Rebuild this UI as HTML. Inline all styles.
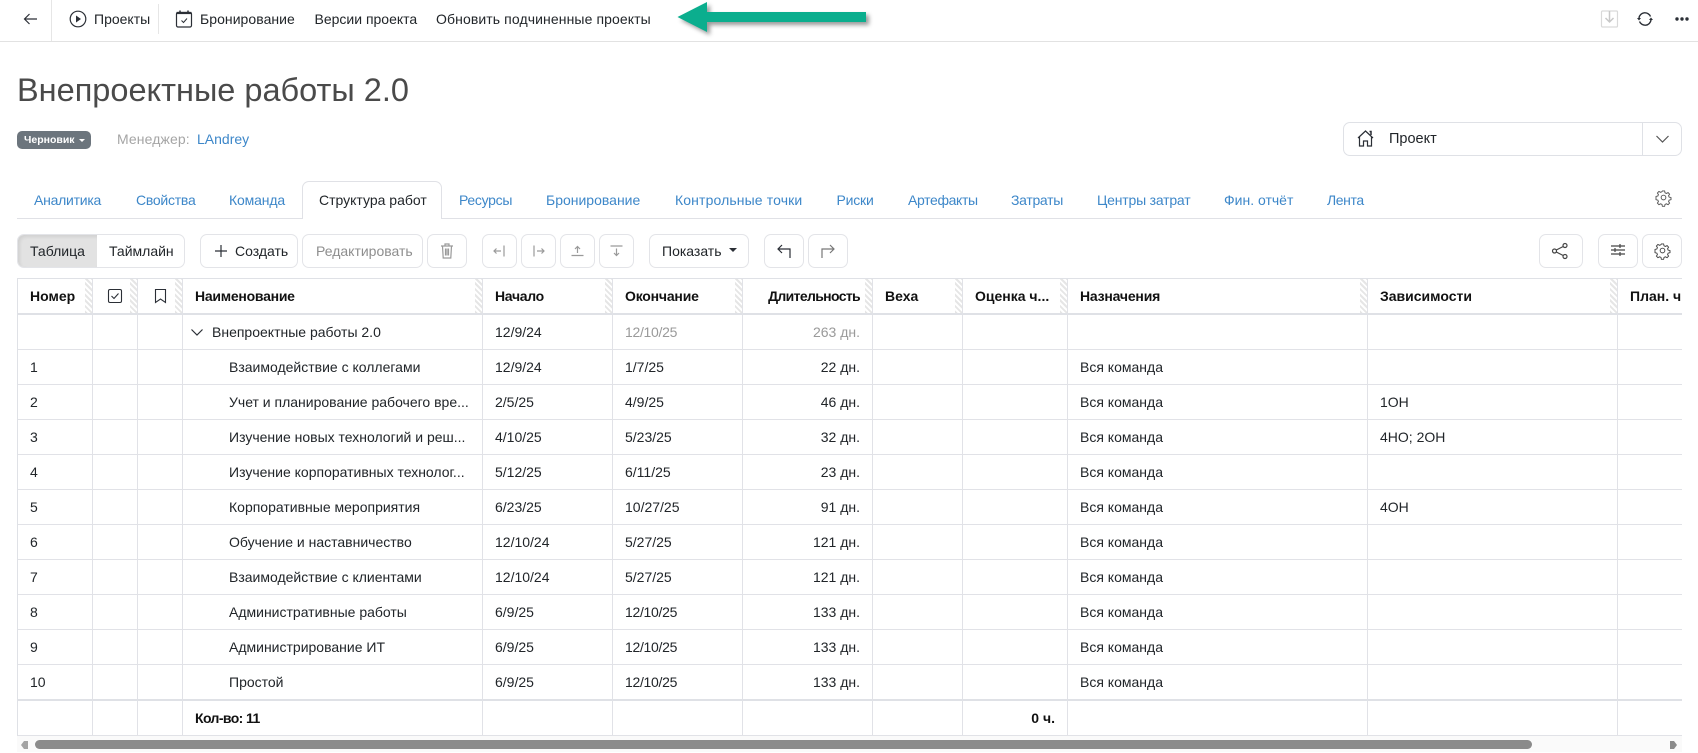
<!DOCTYPE html>
<html lang="ru"><head><meta charset="utf-8"><title>Внепроектные работы 2.0</title>
<style>
*{box-sizing:border-box}
html,body{margin:0;padding:0;background:#fff}
body{width:1698px;height:753px;overflow:hidden;position:relative;font-family:"Liberation Sans","Noto Sans CJK SC",sans-serif;font-size:14px;color:#212529}
.a{position:absolute;white-space:nowrap;line-height:20px}
.i{position:absolute;overflow:visible;fill:none;stroke:#2b2f36;stroke-width:1.2}
.tab{color:#3d87c9;top:190px}
.b{position:absolute;top:234px;height:34px;border:1px solid #e3e4e8;border-radius:7px;background:#fff}
.d{stroke:#9a9a9a}
table{position:absolute;left:17px;top:278px;width:1665px;border-collapse:separate;border-spacing:0;table-layout:fixed;border-left:1px solid #dfe1e6;border-top:1px solid #dfe1e6}
th,td{padding:0 12px;border-right:1px solid #e1e2e7;border-bottom:1px solid #e1e2e7;white-space:nowrap;overflow:hidden;text-align:left;font-weight:400;height:35px}
th{height:36px;border-bottom:2px solid #dfe1e6;font-weight:700;color:#111;position:relative}
th:not(:last-child)::after{content:"";position:absolute;right:0;top:0;bottom:0;width:7px;background:repeating-linear-gradient(45deg,#e6e6e6 0 2px,#fff 2px 4px)}
td:last-child,th:last-child{border-right:0}
.r{text-align:right}
.n{padding-left:46px}
.g{color:#9a9a9a}
.e{text-overflow:ellipsis}
.t{letter-spacing:-.3px}
tr.l td{height:34px;border-bottom:0}
tr.f td{height:37px;border-top:2px solid #dfe1e6;font-weight:700;color:#111}
</style></head><body>

<div style="position:absolute;left:0;top:41px;width:1698px;height:1px;background:#e2e2e2"></div>
<div style="position:absolute;left:51px;top:0;width:1px;height:41px;background:#e6e6e6"></div>
<div style="position:absolute;left:158px;top:4px;width:1px;height:30px;background:#e6e6e6"></div>

<svg class="i" style="left:23px;top:12px" width="15" height="14" viewBox="0 0 15 14"><path d="M14 7H1.500M6.500 2 1.500 7l5 5"/></svg>
<svg class="i" style="left:69px;top:10px" width="18" height="18" viewBox="0 0 18 18"><circle cx="9" cy="9" r="7.800"/><path d="M7 5.500 12 9l-5 3.500z" fill="#2b2f36" stroke="none"/></svg>
<span class="a" style="left:94px;top:9px">Проекты</span>
<svg class="i" style="left:175px;top:10px" width="18" height="18" viewBox="0 0 18 18"><rect x="1.500" y="2.500" width="15" height="14.500" rx="1.500"/><path d="M1.500 3h15" stroke-width="2.200"/><path d="M5 .5v2M13 .5v2" stroke-width="1.500"/><path d="M6.500 10.500l2 2 3.500-4" stroke-width="1"/></svg>
<span class="a" style="left:200px;top:9px;letter-spacing:.05px">Бронирование</span>
<span class="a" style="left:314.500px;top:9px">Версии проекта</span>
<span class="a" style="left:436px;top:9px;letter-spacing:.1px">Обновить подчиненные проекты</span>

<svg style="position:absolute;left:677px;top:2px;overflow:visible;filter:drop-shadow(3px 3px 2px rgba(0,0,0,.4))" width="190" height="30" viewBox="0 0 190 30"><path d="M0.500 15 30 0V10H189V20H30V30z" fill="#0bae8e"/></svg>

<svg class="i" style="left:1601px;top:10px;stroke:#d9d9d9" width="17" height="18" viewBox="0 0 17 18"><rect x=".5" y="1" width="16" height="16" rx="1"/><path d="M8.500 1v10M4.500 8l4 4 4-4" stroke="#c8c8c8" stroke-width="1.500"/></svg>
<svg class="i" style="left:1637px;top:11px;stroke-width:1.400" width="16" height="16" viewBox="0 0 16 16"><path d="M2 7A6 6 0 0 1 13.500 5.500M14 9A6 6 0 0 1 2.500 10.500"/><path d="M0 7h4L2 9.500zM16 9h-4l2-2.500z" fill="#2b2f36" stroke="none"/></svg>
<svg class="i" style="left:1675px;top:17px;stroke:none;fill:#2b2f36" width="14" height="4" viewBox="0 0 14 4"><circle cx="2" cy="2" r="1.700"/><circle cx="7" cy="2" r="1.700"/><circle cx="12" cy="2" r="1.700"/></svg>

<div class="a" style="left:17px;top:69px;font-size:32.500px;line-height:42px;color:#4a4a4a">Внепроектные работы 2.0</div>

<div style="position:absolute;left:17px;top:131px;width:74px;height:18px;background:#6c757d;border-radius:5px"></div>
<span class="a" style="left:24px;top:130px;color:#fff;font-size:10.500px;font-weight:700">Черновик</span>
<div style="position:absolute;left:79px;top:139px;border:3px solid transparent;border-top-color:#fff;border-bottom:0"></div>
<span class="a" style="left:117px;top:129px;color:#a5a5a5;letter-spacing:.1px">Менеджер:</span>
<span class="a" style="left:197px;top:129px;color:#3d87c9">LAndrey</span>

<div style="position:absolute;left:1343px;top:122px;width:339px;height:34px;border:1px solid #dfe1e6;border-radius:7px"></div>
<div style="position:absolute;left:1642px;top:122px;width:1px;height:34px;background:#dfe1e6"></div>
<svg class="i" style="left:1357px;top:130px" width="17" height="17" viewBox="0 0 17 17"><path d="M1 8 8.500 1 16 8M2.500 7v9h4v-5h4v5h4V7"/><path d="M12.500 1.500h1.500V5" stroke-width="1.500"/></svg>
<span class="a" style="left:1389px;top:129px;font-size:14.500px">Проект</span>
<svg class="i" style="left:1656px;top:135px;stroke:#555" width="13" height="8" viewBox="0 0 13 8"><path d="M.5 1l6 6 6-6"/></svg>

<div style="position:absolute;left:17px;top:218px;width:1665px;height:1px;background:#e0e1e6"></div>
<div style="position:absolute;left:302px;top:181px;width:140px;height:38px;background:#fff;border:1px solid #e0e1e6;border-bottom:0;border-radius:7px 7px 0 0"></div>
<span class="a tab" style="left:34px;letter-spacing:-.25px">Аналитика</span>
<span class="a tab" style="left:136px;letter-spacing:-.25px">Свойства</span>
<span class="a tab" style="left:229px;letter-spacing:-.15px">Команда</span>
<span class="a tab" style="left:319px;color:#212529">Структура работ</span>
<span class="a tab" style="left:459px;letter-spacing:-.3px">Ресурсы</span>
<span class="a tab" style="left:546px">Бронирование</span>
<span class="a tab" style="left:675px;letter-spacing:.12px">Контрольные точки</span>
<span class="a tab" style="left:836.500px;letter-spacing:-.2px">Риски</span>
<span class="a tab" style="left:908px;letter-spacing:-.35px">Артефакты</span>
<span class="a tab" style="left:1011px;letter-spacing:-.3px">Затраты</span>
<span class="a tab" style="left:1097px;letter-spacing:-.2px">Центры затрат</span>
<span class="a tab" style="left:1224px">Фин. отчёт</span>
<span class="a tab" style="left:1327px;letter-spacing:-.4px">Лента</span>
<svg class="i" style="left:1656px;top:190px;stroke:#555;stroke-width:1" width="15" height="15" viewBox="0 0 16 16"><circle cx="8" cy="8" r="2.500"/><path d="M6.800 1h2.400l.4 2 1.500.7 1.800-1 1.600 1.700-1.100 1.700.6 1.500 2 .5v2.200l-2 .5-.6 1.500 1.100 1.700-1.600 1.700-1.800-1-1.500.7-.4 2H6.800l-.4-2-1.500-.7-1.800 1-1.600-1.700 1.100-1.700-.6-1.500-2-.5V6.900l2-.5.6-1.500-1.100-1.700 1.600-1.700 1.800 1 1.500-.7z"/></svg>

<div class="b" style="left:17px;width:168px"></div>
<div style="position:absolute;left:18px;top:235px;width:79px;height:32px;background:#e2e2e2;border-radius:6px 0 0 6px;box-shadow:inset 2px 2px 3px rgba(0,0,0,.08)"></div>
<span class="a" style="left:30px;top:241px">Таблица</span>
<span class="a" style="left:109px;top:241px">Таймлайн</span>

<div class="b" style="left:200px;width:98px"></div>
<svg class="i" style="left:215px;top:245px" width="12" height="12" viewBox="0 0 12 12"><path d="M6 0v12M0 6h12"/></svg>
<span class="a" style="left:235px;top:241px">Создать</span>
<div class="b" style="left:302px;width:121px"></div>
<span class="a" style="left:316px;top:241px;color:#8e8e8e">Редактировать</span>
<div class="b" style="left:427px;width:40px"></div>
<svg class="i d" style="left:440px;top:243px" width="14" height="16" viewBox="0 0 14 16"><path d="M1 3h12M5 3V1h4v2M2.500 3l.7 12h7.600l.7-12M5.500 5.500v7M7 5.500v7M8.500 5.500v7"/></svg>

<div class="b" style="left:482px;width:35px"></div>
<svg class="i d" style="left:493px;top:245px" width="12" height="12" viewBox="0 0 12 12"><path d="M11 .5v11M8 6H1M3.500 3.500 1 6l2.500 2.500"/></svg>
<div class="b" style="left:521px;width:35px"></div>
<svg class="i d" style="left:533px;top:245px" width="12" height="12" viewBox="0 0 12 12"><path d="M1 .5v11M4 6h7M8.500 3.500 11 6 8.500 8.500"/></svg>
<div class="b" style="left:560px;width:35px"></div>
<svg class="i d" style="left:571px;top:245px" width="13" height="12" viewBox="0 0 13 12"><path d="M.5 10.500h12M6.500 8V2M4 4l2.500-2.500L9 4"/></svg>
<div class="b" style="left:599px;width:35px"></div>
<svg class="i d" style="left:610px;top:245px" width="13" height="12" viewBox="0 0 13 12"><path d="M.5 1h12M6.500 3.500v7M4 8l2.500 2.500L9 8"/></svg>

<div class="b" style="left:649px;width:100px"></div>
<span class="a" style="left:662px;top:241px">Показать</span>
<div style="position:absolute;left:729px;top:248px;border:4px solid transparent;border-top:4px solid #2b2f36;border-bottom:0"></div>
<div class="b" style="left:764px;width:40px"></div>
<svg class="i" style="left:777px;top:244px" width="14" height="14" viewBox="0 0 14 14"><path d="M13 14V5H1M5 1 1 5l4 4"/></svg>
<div class="b" style="left:808px;width:40px"></div>
<svg class="i" style="left:821px;top:244px;stroke:#777" width="14" height="14" viewBox="0 0 14 14"><path d="M1 14V5h12M9 1l4 4-4 4"/></svg>

<div class="b" style="left:1539px;width:44px"></div>
<svg class="i" style="left:1552px;top:243px;stroke:#444" width="16" height="16" viewBox="0 0 16 16"><circle cx="2.500" cy="8" r="2"/><circle cx="13" cy="2.500" r="2"/><circle cx="13" cy="13.500" r="2"/><path d="M4.300 7 11.200 3.500M4.300 9l6.900 3.500"/></svg>
<div class="b" style="left:1598px;width:40px"></div>
<svg class="i" style="left:1611px;top:243px;stroke:#444" width="14" height="14" viewBox="0 0 14 14"><path d="M0 3h14M0 7h14M0 11h14M9 1v4M4 5v4M9 9v4"/></svg>
<div class="b" style="left:1642px;width:40px"></div>
<svg class="i" style="left:1655px;top:243px;stroke:#444;stroke-width:1" width="15" height="15" viewBox="0 0 16 16"><circle cx="8" cy="8" r="2.500"/><path d="M6.800 1h2.400l.4 2 1.500.7 1.800-1 1.600 1.700-1.100 1.700.6 1.500 2 .5v2.200l-2 .5-.6 1.500 1.100 1.700-1.600 1.700-1.800-1-1.500.7-.4 2H6.800l-.4-2-1.500-.7-1.800 1-1.600-1.700 1.100-1.700-.6-1.500-2-.5V6.900l2-.5.6-1.500-1.100-1.700 1.600-1.700 1.800 1 1.500-.7z"/></svg>

<table>
<colgroup><col style="width:75px"><col style="width:45px"><col style="width:45px"><col style="width:300px"><col style="width:130px"><col style="width:130px"><col style="width:130px"><col style="width:90px"><col style="width:105px"><col style="width:300px"><col style="width:250px"><col></colgroup>
<tr><th>Номер</th><th></th><th></th><th style="letter-spacing:-.25px">Наименование</th><th style="letter-spacing:-.3px">Начало</th><th style="letter-spacing:-.2px">Окончание</th><th class="r" style="letter-spacing:-.65px">Длительность</th><th>Веха</th><th class="e">Оценка ч...</th><th style="letter-spacing:-.2px">Назначения</th><th>Зависимости</th><th>План. ч</th></tr>
<tr><td></td><td></td><td></td><td style="padding-left:29px">Внепроектные работы 2.0</td><td>12/9/24</td><td class="g t">12/10/25</td><td class="r g">263 дн.</td><td></td><td></td><td></td><td></td><td></td></tr>
<tr><td>1</td><td></td><td></td><td class="n">Взаимодействие с коллегами</td><td>12/9/24</td><td>1/7/25</td><td class="r">22 дн.</td><td></td><td></td><td>Вся команда</td><td></td><td></td></tr>
<tr><td>2</td><td></td><td></td><td class="n">Учет и планирование рабочего вре...</td><td>2/5/25</td><td>4/9/25</td><td class="r">46 дн.</td><td></td><td></td><td>Вся команда</td><td>1ОН</td><td></td></tr>
<tr><td>3</td><td></td><td></td><td class="n">Изучение новых технологий и реш...</td><td>4/10/25</td><td>5/23/25</td><td class="r">32 дн.</td><td></td><td></td><td>Вся команда</td><td>4НО; 2ОН</td><td></td></tr>
<tr><td>4</td><td></td><td></td><td class="n">Изучение корпоративных технолог...</td><td>5/12/25</td><td>6/11/25</td><td class="r">23 дн.</td><td></td><td></td><td>Вся команда</td><td></td><td></td></tr>
<tr><td>5</td><td></td><td></td><td class="n">Корпоративные мероприятия</td><td>6/23/25</td><td>10/27/25</td><td class="r">91 дн.</td><td></td><td></td><td>Вся команда</td><td>4ОН</td><td></td></tr>
<tr><td>6</td><td></td><td></td><td class="n">Обучение и наставничество</td><td>12/10/24</td><td>5/27/25</td><td class="r">121 дн.</td><td></td><td></td><td>Вся команда</td><td></td><td></td></tr>
<tr><td>7</td><td></td><td></td><td class="n">Взаимодействие с клиентами</td><td>12/10/24</td><td>5/27/25</td><td class="r">121 дн.</td><td></td><td></td><td>Вся команда</td><td></td><td></td></tr>
<tr><td>8</td><td></td><td></td><td class="n">Административные работы</td><td>6/9/25</td><td class="t">12/10/25</td><td class="r">133 дн.</td><td></td><td></td><td>Вся команда</td><td></td><td></td></tr>
<tr><td>9</td><td></td><td></td><td class="n">Администрирование ИТ</td><td>6/9/25</td><td class="t">12/10/25</td><td class="r">133 дн.</td><td></td><td></td><td>Вся команда</td><td></td><td></td></tr>
<tr class="l"><td>10</td><td></td><td></td><td class="n">Простой</td><td>6/9/25</td><td class="t">12/10/25</td><td class="r">133 дн.</td><td></td><td></td><td>Вся команда</td><td></td><td></td></tr>
<tr class="f"><td></td><td></td><td></td><td style="letter-spacing:-.6px">Кол-во: 11</td><td></td><td></td><td></td><td></td><td class="r">0 ч.</td><td></td><td></td><td></td></tr>
</table>

<svg class="i" style="left:108px;top:289px;stroke-width:1.100" width="14" height="14" viewBox="0 0 14 14"><rect x=".5" y=".5" width="13" height="13" rx="1.500"/><path d="M3.500 7l2.500 2.500 4.500-5"/></svg>
<svg class="i" style="left:155px;top:289px;stroke-width:1.100" width="11" height="14" viewBox="0 0 11 14"><path d="M.5.500h10v13l-5-3.500-5 3.500z"/></svg>
<svg class="i" style="left:191px;top:329px" width="12" height="7" viewBox="0 0 12 7"><path d="M.5.500 6 6 11.500.500"/></svg>

<div style="position:absolute;left:17px;top:736px;width:1665px;height:16px;background:#fafafa"></div>
<div style="position:absolute;left:35px;top:740px;width:1497px;height:9px;background:#8b8b8b;border-radius:5px"></div>
<svg style="position:absolute;left:21px;top:741px" width="8" height="8" viewBox="0 0 8 8"><path d="M7 0V8H3L0 4 3 0z" fill="#a3a3a3"/></svg>
<svg style="position:absolute;left:1670px;top:741px" width="8" height="8" viewBox="0 0 8 8"><path d="M0 0V8H4L7 4 4 0z" fill="#8b8b8b"/></svg>
</body></html>
